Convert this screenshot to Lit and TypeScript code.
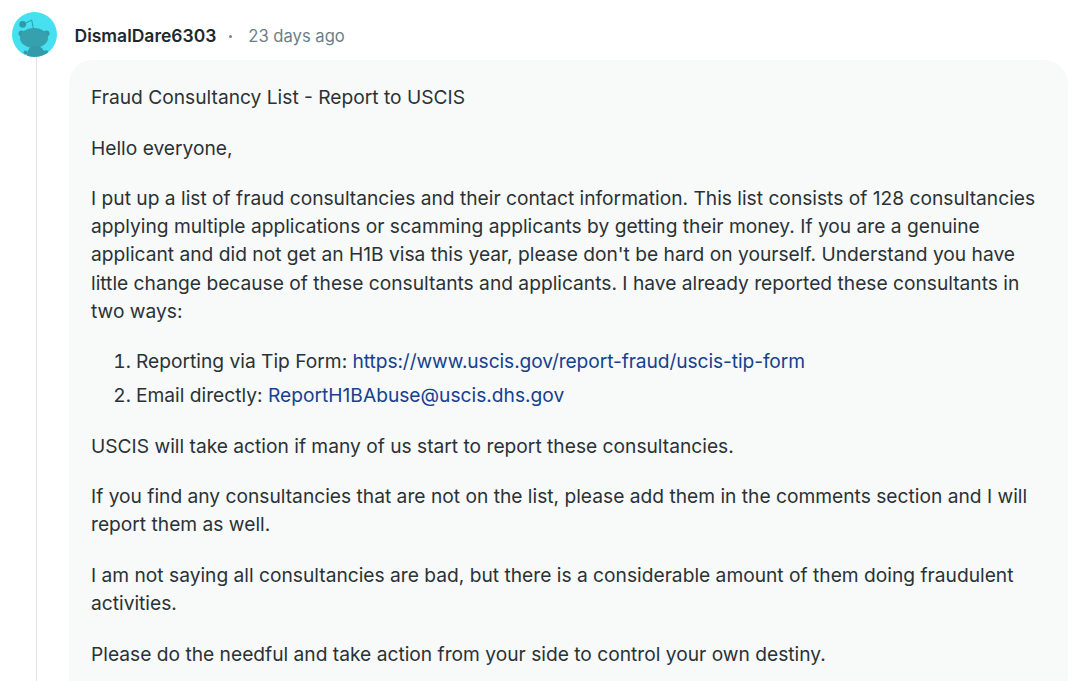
import { LitElement, html, css } from "lit";
import { customElement } from "lit/decorators.js";

@customElement("app-root")
export class AppRoot extends LitElement {
  static styles = css`
    :host {
      display: block;
      width: 1080px;
      height: 681px;
      overflow: hidden;
      background: #fff;
      font-family: Inter, "Liberation Sans", sans-serif;
      color: #2a3236;
      -webkit-font-smoothing: antialiased;
    }
    .page {
      display: grid;
      grid-template-columns: 45px 1fr;
      column-gap: 12px;
      padding: 12px 12px 0 12px;
      height: 669px;
      box-sizing: border-box;
    }
    .rail {
      display: flex;
      flex-direction: column;
      align-items: center;
    }
    .avatar {
      width: 45px;
      height: 45px;
      flex: none;
      display: block;
    }
    .line {
      flex: 1;
      width: 1px;
      background: #dfe3e5;
      margin-left: 3px;
    }
    .main {
      display: flex;
      flex-direction: column;
      min-width: 0;
    }
    .head {
      display: flex;
      align-items: center;
      height: 47px;
      margin-left: 5.5px;
      font-size: 16.6px;
    }
    .name {
      font-size: 17.5px;
      font-weight: 600;
      color: #1c2a30;
    }
    .dot {
      width: 3px;
      height: 3px;
      border-radius: 50%;
      background: #6f8590;
      margin: 2px 16px 0 13px;
    }
    .time {
      color: #6a7f8a;
    }
    .card {
      flex: 1;
      background: #f8f9f9;
      border-radius: 24px 24px 0 0;
      padding: 23px 20px 0 22px;
      margin-top: 1px;
      font-size: 19.2px;
      line-height: 28.2px;
    }
    p {
      margin: 0 0 22.3px;
    }
    ol {
      margin: 0 0 22.4px;
      padding: 0 0 0 45px;
    }
    li {
      margin-bottom: 5.6px;
    }
    li:last-child {
      margin-bottom: 0;
    }
    a {
      color: #15418f;
      text-decoration: none;
    }
    .url {
      letter-spacing: -0.09px;
    }
  `;

  render() {
    return html`
      <div class="page">
        <div class="rail">
          <svg class="avatar" viewBox="0 0 45 45" aria-hidden="true">
            <circle cx="22.5" cy="22.5" r="22.5" fill="#46e0f0" />
            <clipPath id="c"><circle cx="22.5" cy="22.5" r="22.5" /></clipPath>
            <g clip-path="url(#c)">
              <path d="M13 11.500 L19.700 8 L21.500 17" fill="none" stroke="#2f9aa8" stroke-width="1" />
              <circle cx="10.700" cy="12.300" r="3.400" fill="#2f9aa8" />
              <circle cx="9.500" cy="21.500" r="3" fill="#329aa8" />
              <circle cx="34.500" cy="21.500" r="3" fill="#329aa8" />
              <ellipse cx="22" cy="26" rx="14" ry="10" fill="#37a0ae" />
              <path d="M15 45 C15 38 17 34 23.500 34 C30 34 33 38 33 45 Z" fill="#329aa8" />
              <circle cx="13.500" cy="40.500" r="2" fill="#329aa8" />
              <circle cx="34" cy="40.500" r="2.200" fill="#329aa8" />
            </g>
          </svg>
          <div class="line"></div>
        </div>
        <div class="main">
          <div class="head">
            <span class="name">DismalDare6303</span>
            <span class="dot"></span>
            <span class="time">23 days ago</span>
          </div>
          <div class="card">
            <p>Fraud Consultancy List - Report to USCIS</p>
            <p>Hello everyone,</p>
            <p>I put up a list of fraud consultancies and their contact information. This list consists of 128 consultancies applying multiple applications or scamming applicants by getting their money. If you are a genuine applicant and did not get an H1B visa this year, please don't be hard on yourself. Understand you have little change because of these consultants and applicants. I have already reported these consultants in two ways:</p>
            <ol>
              <li>Reporting via Tip Form: <a class="url" href="#">https://www.uscis.gov/report-fraud/uscis-tip-form</a></li>
              <li>Email directly: <a href="#">ReportH1BAbuse@uscis.dhs.gov</a></li>
            </ol>
            <p>USCIS will take action if many of us start to report these consultancies.</p>
            <p>If you find any consultancies that are not on the list, please add them in the comments section and I will report them as well.</p>
            <p>I am not saying all consultancies are bad, but there is a considerable amount of them doing fraudulent activities.</p>
            <p>Please do the needful and take action from your side to control your own destiny.</p>
          </div>
        </div>
      </div>
    `;
  }
}
